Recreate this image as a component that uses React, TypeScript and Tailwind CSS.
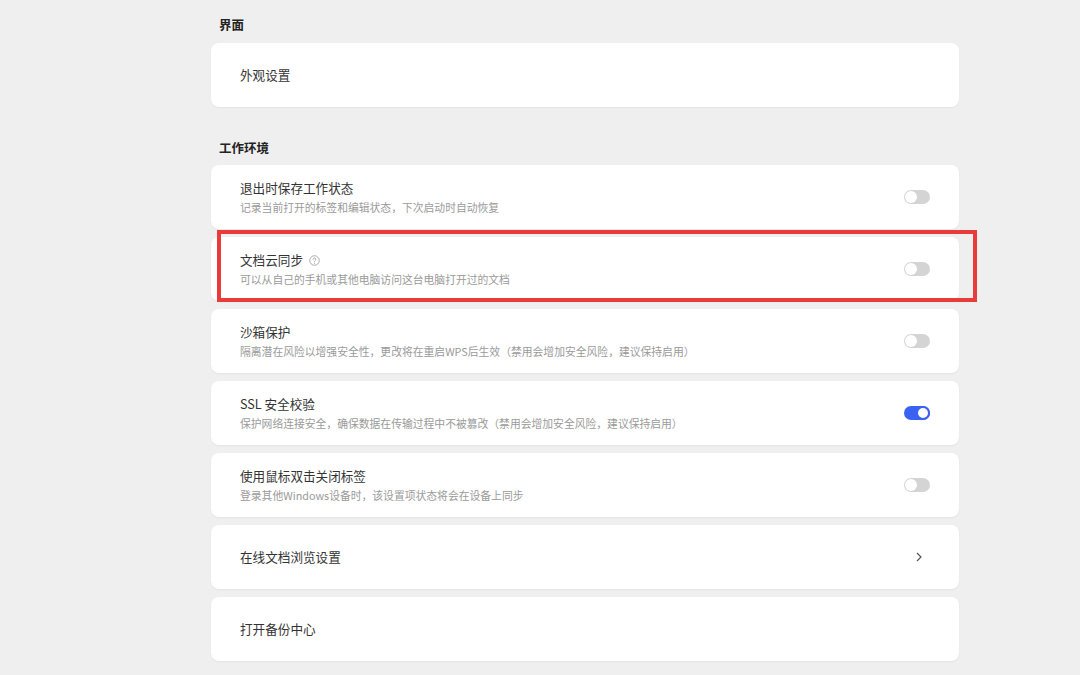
import React from "react";

const font = { fontFamily: '"Noto Sans CJK SC", "Noto Sans", sans-serif' };

const Toggle = ({ on }: { on?: boolean }) => (
  <div
    className={`w-[26px] h-[14px] rounded-full flex items-center px-[1px] ${
      on ? "bg-[#3a62f2] justify-end" : "bg-[#d4d4d4] justify-start"
    }`}
  >
    <div
      className={`w-[12px] h-[12px] rounded-full bg-white ${on ? "border-2 border-[#3a62f2] w-[14px] h-[14px] -mr-[1px]" : ""}`}
    />
  </div>
);

const HelpIcon = () => (
  <svg width="11" height="11" viewBox="0 0 12 12" className="ml-[6px] mt-[1px]">
    <circle cx="6" cy="6" r="5.2" fill="none" stroke="#9a9a9a" strokeWidth="0.9" />
    <path d="M4.5 4.7a1.5 1.5 0 1 1 2.1 1.4c-.4.2-.6.5-.6.9v.4" fill="none" stroke="#9a9a9a" strokeWidth="0.9" strokeLinecap="round" />
    <circle cx="6" cy="8.9" r="0.55" fill="#9a9a9a" />
  </svg>
);

const Card = ({ title, desc, right, help }: any) => (
  <div className="h-[64px] bg-white rounded-[8px] shadow-[0_1px_2px_rgba(0,0,0,0.05)] flex items-center justify-between pl-[29px] pr-[29px]">
    <div className="flex flex-col justify-center">
      <div className="flex items-center text-[12.6px] leading-[18px] text-[#333]">
        {title}
        {help && <HelpIcon />}
      </div>
      {desc && <div className="text-[10.8px] leading-[16px] mt-[2px] text-[#9a9a9a]">{desc}</div>}
    </div>
    {right}
  </div>
);

const Chevron = () => (
  <svg width="8" height="12" viewBox="0 0 8 12" className="mr-[7px]">
    <path d="M2 2l4 4-4 4" fill="none" stroke="#555" strokeWidth="1.2" />
  </svg>
);

export default function App() {
  return (
    <div className="w-[1080px] h-[675px] bg-[#efefef] overflow-hidden" style={font}>
      <div className="w-[748px] ml-[211px] pt-[15px]">
        <div className="pl-[8px] text-[12.5px] leading-[20px] font-bold text-[#222]">界面</div>
        <div className="mt-[8px]">
          <Card title="外观设置" />
        </div>
        <div className="pl-[8px] mt-[31px] text-[12.5px] leading-[20px] font-bold text-[#222]">工作环境</div>
        <div className="mt-[7px] flex flex-col gap-[8px]">
          <Card title="退出时保存工作状态" desc="记录当前打开的标签和编辑状态，下次启动时自动恢复" right={<Toggle />} />
          <div className="relative">
            <Card title="文档云同步" help desc="可以从自己的手机或其他电脑访问这台电脑打开过的文档" right={<Toggle />} />
            <div className="absolute left-[6px] top-[-7px] w-[760px] h-[72px] border-[4px] border-[#ea3b3b]" />
          </div>
          <Card title="沙箱保护" desc="隔离潜在风险以增强安全性，更改将在重启WPS后生效（禁用会增加安全风险，建议保持启用）" right={<Toggle />} />
          <Card title="SSL 安全校验" desc="保护网络连接安全，确保数据在传输过程中不被篡改（禁用会增加安全风险，建议保持启用）" right={<Toggle on />} />
          <Card title="使用鼠标双击关闭标签" desc="登录其他Windows设备时，该设置项状态将会在设备上同步" right={<Toggle />} />
          <Card title="在线文档浏览设置" right={<Chevron />} />
          <Card title="打开备份中心" />
        </div>
      </div>
    </div>
  );
}
